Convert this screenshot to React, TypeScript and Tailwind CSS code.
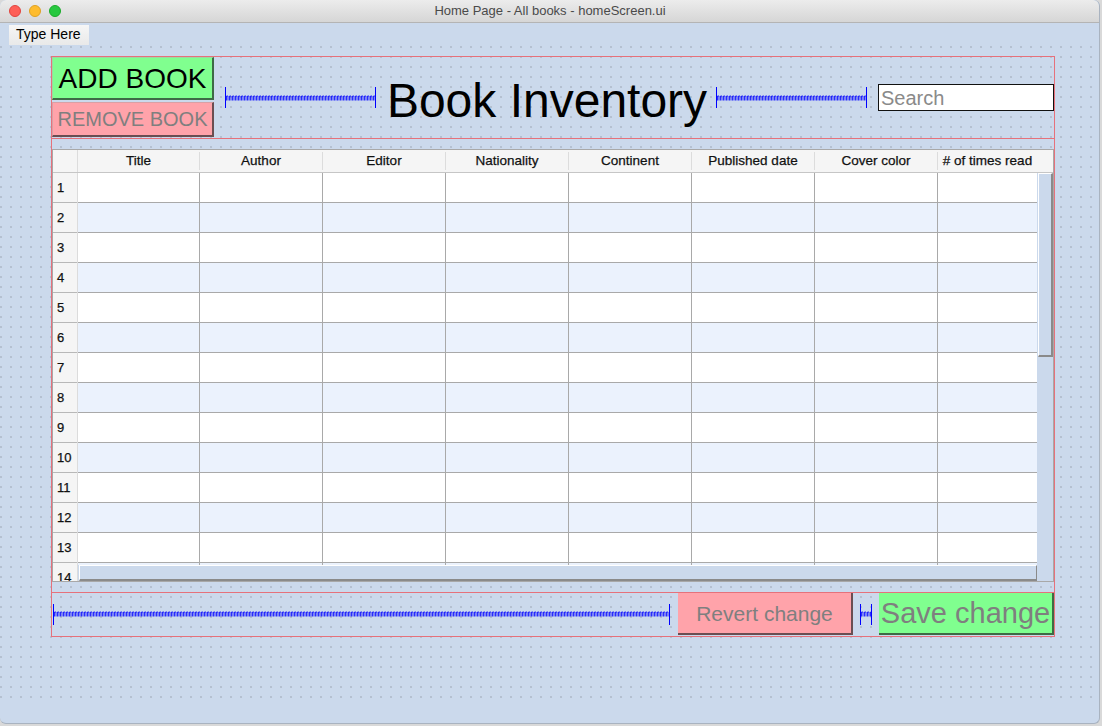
import React from 'react';

const columns = ['Title', 'Author', 'Editor', 'Nationality', 'Continent', 'Published date', 'Cover color', '# of times read'];
const colWidths = ['w-[122px]', 'w-[123px]', 'w-[123px]', 'w-[123px]', 'w-[123px]', 'w-[123px]', 'w-[123px]', 'flex-1'];
const rows = Array.from({ length: 14 }, (_, i) => i + 1);

function Spring({ id, className = '' }: { id: string; className?: string }) {
  return (
    <div className={`flex items-center min-w-0 ${className}`}>
      <div className="w-px h-[21px] bg-[#0000ff] shrink-0" />
      <svg className="flex-1 min-w-0 h-[6px]" width="1" height="6">
        <defs>
          <pattern id={id} width="3" height="6" patternUnits="userSpaceOnUse">
            <path d="M0.5 5.5 L0.5 1 L2 1 L2 5.5" stroke="#0000ff" strokeWidth="0.8" fill="none" />
          </pattern>
        </defs>
        <rect width="100%" height="6" fill={`url(#${id})`} />
      </svg>
      <div className="w-px h-[21px] bg-[#0000ff] shrink-0" />
    </div>
  );
}

function TitleBar() {
  return (
    <div className="h-[23px] shrink-0 flex items-center bg-gradient-to-b from-[#ececec] to-[#d6d6d6] border-b border-[#b4b4b4] rounded-t-[6px]">
      <div className="flex items-center gap-[8px] pl-[9px]">
        <div className="w-[12px] h-[12px] rounded-full bg-[#fe5f57] border border-[#e0443e]" />
        <div className="w-[12px] h-[12px] rounded-full bg-[#febc2e] border border-[#dea123]" />
        <div className="w-[12px] h-[12px] rounded-full bg-[#28c840] border border-[#1aab29]" />
      </div>
      <div className="flex-1 text-center text-[13px] text-[#4a4a4a] pr-[60px]">Home Page - All books - homeScreen.ui</div>
    </div>
  );
}

function TableHeader() {
  return (
    <div className="flex h-[23px] shrink-0 bg-[#f5f5f5] border-b border-[#c6c6c6]">
      <div className="w-[25px] shrink-0 border-r border-[#dcdcdc]" />
      {columns.map((c, i) => (
        <div
          key={c}
          className={`${i === 7 ? 'w-[99px]' : colWidths[i]} shrink-0 flex items-center justify-center text-[13.5px] text-[#111] [-webkit-text-stroke:0.25px_#111] ${i < 7 ? 'border-r border-[#dcdcdc] my-[2px]' : ''}`}
        >
          {c}
        </div>
      ))}
      <div className="flex-1" />
    </div>
  );
}

function Table() {
  return (
    <div className="h-[433px] shrink-0 border border-[#a8a8a8] bg-white flex flex-col">
      <TableHeader />
      <div className="flex h-[408px]">
        <div className="w-[25px] shrink-0 flex flex-col overflow-hidden bg-[#f5f5f5] border-r border-[#dcdcdc]">
          {rows.map((n) => (
            <div key={n} className="h-[30px] shrink-0 border-b border-[#b8b8b8] pl-[4px] pt-px flex items-center text-[13px] text-[#111] [-webkit-text-stroke:0.25px_#111]">
              {n}
            </div>
          ))}
        </div>
        <div className="flex-1 min-w-0 flex flex-col">
          <div className="flex flex-1 min-h-0">
            <div className="flex-1 min-w-0 overflow-hidden flex flex-col">
              {rows.map((n) => (
                <div key={n} className={`h-[30px] shrink-0 flex border-b border-[#a9a9a9] ${n % 2 === 0 ? 'bg-[#ebf2fd]' : 'bg-white'}`}>
                  {colWidths.map((w, i) => (
                    <div key={i} className={`${w} shrink-0 ${i < 7 ? 'border-r border-[#a9a9a9]' : ''}`} />
                  ))}
                </div>
              ))}
            </div>
            <div className="w-[16px] shrink-0 bg-[#cbd9ec] flex flex-col">
              <div className="h-[184px] ml-px bg-[#cbd9ec] border-t border-l border-white border-r-2 border-b-2 border-r-[#8a8a8a] border-b-[#8a8a8a]" />
            </div>
          </div>
          <div className="flex h-[16px] shrink-0">
            <div className="flex-1 bg-[#cbd9ec] pl-px">
              <div className="h-full bg-[#cbd9ec] border-t border-l border-white border-b-2 border-r border-b-[#8a8a8a] border-r-[#8a8a8a]" />
            </div>
            <div className="w-[16px] bg-[#cbd9ec]" />
          </div>
        </div>
      </div>
    </div>
  );
}

export default function App() {
  return (
    <div className="w-[1102px] h-[726px] bg-[#d9d9d9] font-['Liberation_Sans',Arial,sans-serif] overflow-hidden">
      <div className="w-[1100px] h-[724px] flex flex-col bg-[#cbd9ec] rounded-[6px] border-r border-b border-[#a9b3c0] overflow-hidden">
        <TitleBar />
        <div className="h-[23px] shrink-0 flex items-center pl-[9px]">
          <div className="h-[20px] w-[80px] flex items-center pl-[7px] bg-gradient-to-b from-[#f6f6f6] to-[#e9e9e9] text-[14px] text-black">
            Type Here
          </div>
        </div>
        <div className="h-[654px] shrink-0 pl-[51px] pt-[10px] bg-[radial-gradient(circle_at_1px_1px,#aab4c3_0.6px,transparent_0.9px)] bg-[length:10px_10px] bg-[position:10px_0px]">
          <div className="w-[1004px] h-[581px] border border-[#e6717b] flex flex-col">
            {/* header */}
            <div className="h-[82px] shrink-0 border-b border-[#e6717b] flex items-center">
              <div className="w-[162px] shrink-0 flex flex-col gap-[2px] self-stretch pb-px">
                <div className="h-[44px] bg-[#80ff8f] border-t border-l border-[#9ad9a3] border-r-2 border-b-2 border-r-[#3e6a46] border-b-[#3e6a46] flex items-center justify-center text-[28px] text-black leading-none whitespace-nowrap pt-[2px]">
                  ADD BOOK
                </div>
                <div className="h-[35px] bg-[#ffa3aa] border-t border-l border-[#d9a0a5] border-r-2 border-b-2 border-r-[#6a4e52] border-b-[#6a4e52] flex items-center justify-center text-[20px] text-[#7f7f7f] leading-none whitespace-nowrap">
                  REMOVE BOOK
                </div>
              </div>
              <Spring id="sp1" className="flex-1 ml-[11px]" />
              <div className="ml-[11px] shrink-0 whitespace-nowrap text-[48px] leading-none text-black pt-[6px]">Book Inventory</div>
              <Spring id="sp2" className="flex-1 ml-[9px]" />
              <div className="ml-[11px] shrink-0 w-[176px] h-[27px] bg-white border-[1.5px] border-[#111] flex items-center pl-[2px] text-[20px] text-[#8a8a8a]">
                Search
              </div>
            </div>
            <div className="h-[10px] shrink-0" />
            <Table />
            <div className="h-[10px] shrink-0" />
            {/* bottom */}
            <div className="h-[44px] shrink-0 border-t border-[#e6717b] flex items-start pl-px">
              <Spring id="sp3" className="flex-1 h-[42px]" />
              <div className="ml-[8px] shrink-0 w-[175px] h-[42px] bg-[#ffa3aa] border-r-2 border-b-2 border-[#6a4e52] flex items-center justify-center text-[21px] text-[#7f7f7f] whitespace-nowrap pt-px">
                Revert change
              </div>
              <Spring id="sp4" className="ml-[7px] shrink-0 w-[12px] h-[42px]" />
              <div className="ml-[7px] shrink-0 w-[175px] h-[42px] bg-[#80ff8f] border-r-2 border-b-2 border-[#3e6a46] flex items-center justify-center text-[29px] text-[#7f7f7f] whitespace-nowrap pt-px">
                Save change
              </div>
            </div>
          </div>
        </div>
      </div>
    </div>
  );
}
